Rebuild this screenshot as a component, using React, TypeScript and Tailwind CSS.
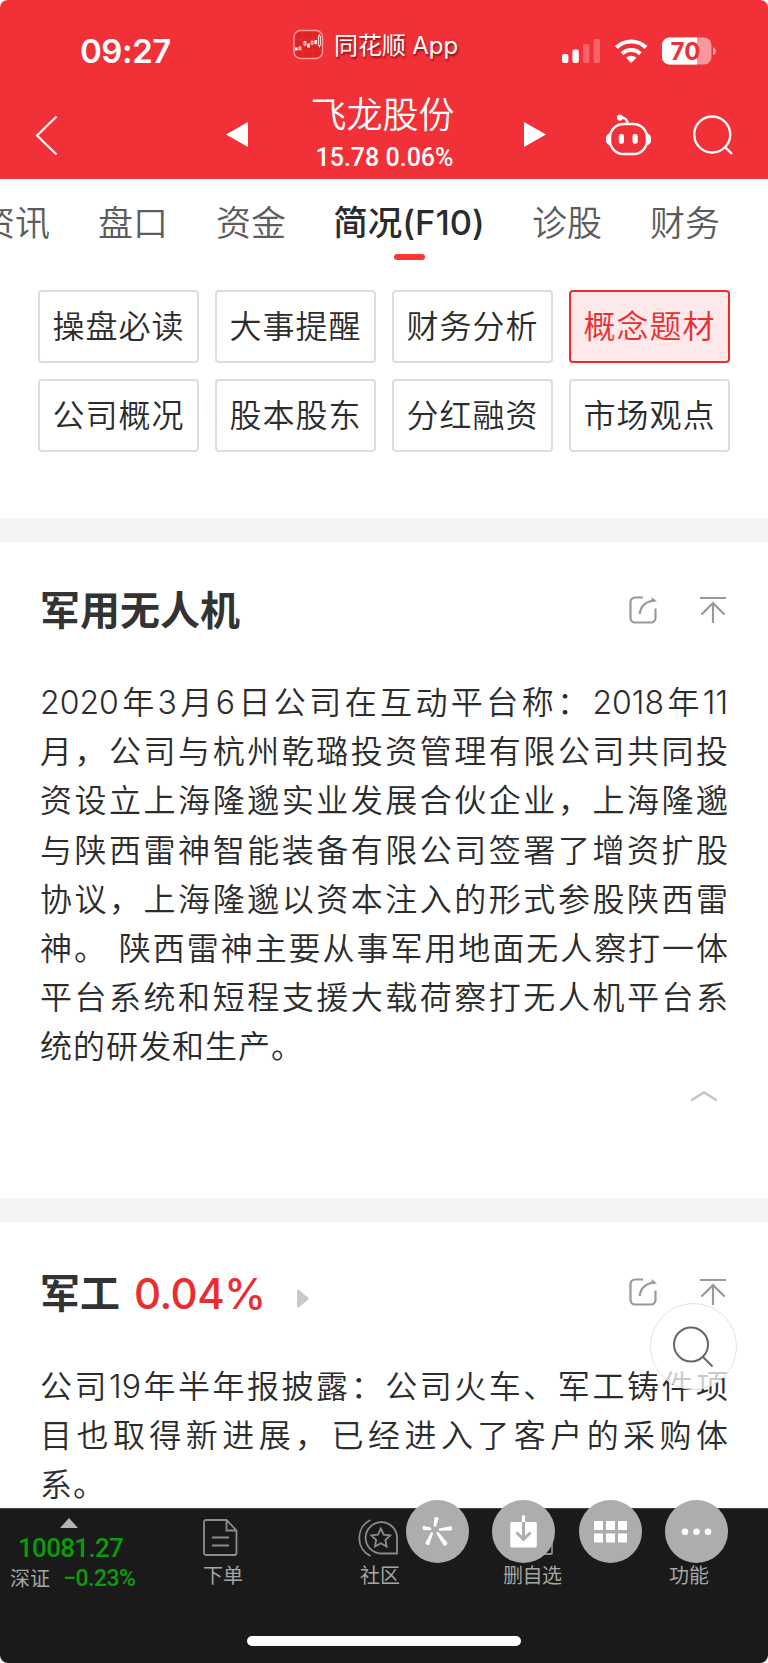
const tabs = [
  { name: "资讯", active: false },
  { name: "盘口", active: false },
  { name: "资金", active: false },
  { name: "简况(F10)", active: true },
  { name: "诊股", active: false },
  { name: "财务", active: false },
];

const subMenus = [
  { name: "操盘必读", active: false },
  { name: "大事提醒", active: false },
  { name: "财务分析", active: false },
  { name: "概念题材", active: true },
  { name: "公司概况", active: false },
  { name: "股本股东", active: false },
  { name: "分红融资", active: false },
  { name: "市场观点", active: false },
];

const droneLines = [
  "2020年3月6日公司在互动平台称：2018年11",
  "月，公司与杭州乾璐投资管理有限公司共同投",
  "资设立上海隆邈实业发展合伙企业，上海隆邈",
  "与陕西雷神智能装备有限公司签署了增资扩股",
  "协议，上海隆邈以资本注入的形式参股陕西雷",
  "神。 陕西雷神主要从事军用地面无人察打一体",
  "平台系统和短程支援大载荷察打无人机平台系",
  "统的研发和生产。",
];

const militaryLines = ["公司19年半年报披露：公司火车、军工铸件项", "目也取得新进展，已经进入了客户的采购体", "系。"];

const StatusBar = () => (
  <div className="flex h-[90px] items-start text-white">
    <span className="ml-[80px] mt-[27px] w-[213px] text-[33px] leading-[48px] font-semibold tracking-[-0.4px]">09:27</span>
    <svg className="mt-[29px] size-[31px]" viewBox="0 0 31 31" fill="none">
      <rect x="1" y="1.5" width="28.5" height="28" rx="6.5" fill="#e02424" stroke="#f9a0a4" strokeWidth="1.4" />
      <path d="M2 18.5h2.6v3H2zM14.2 14.6h2.6v4h-2.6zM21.5 11h2.4v4.2h-2.4z" fill="#fff" />
      <path d="M6.8 16.8v1.2M6 18h1.8v2.8H6zM11 12.5h1.8v3.8H11zM18.2 12.2h1.8v3h-1.8zM25.4 7h2v9.500h-2zM26.4 5v2M26.4 16.5v2" stroke="#fff" strokeWidth="0.9" />
      <path d="M2 10h27M2 22h27M10 3v26M20 3v26" stroke="#f25a5a" strokeWidth="0.4" opacity="0.5" />
    </svg>
    <span className="ml-[10px] mt-[26px] w-[228px] text-[24px] leading-[40px] tracking-[-0.1px] whitespace-nowrap [text-shadow:1px_2px_2px_rgba(80,0,0,0.65)]">
      同花顺 App
    </span>
    <svg className="mt-[36px] h-[30px] w-[160px]" viewBox="0 0 160 30" fill="#fff">
      <rect x="0" y="18" width="6.4" height="9" rx="2" />
      <rect x="10.4" y="13.4" width="6.4" height="13.6" rx="2" />
      <rect x="21" y="8" width="6.4" height="19" rx="2" opacity="0.25" />
      <rect x="31.6" y="3" width="6.4" height="24" rx="2" opacity="0.25" />
      <path d="M69.2 27 64 21.8a7.6 7.6 0 0 1 10.4 0z" />
      <path d="M60 17.8a13.2 13.2 0 0 1 18.4 0" fill="none" stroke="#fff" strokeWidth="4" />
      <path d="M54.4 11.6a21 21 0 0 1 29.6 0" fill="none" stroke="#fff" strokeWidth="4.2" />
      <rect x="100" y="1.5" width="49.5" height="27" rx="7.5" opacity="0.5" />
      <path d="M107.5 1.5H135v27h-27.500a7.500 7.500 0 0 1-7.500-7.500V9a7.500 7.500 0 0 1 7.500-7.500z" />
      <path d="M151 11.2c4 .8 4 7 0 7.800z" opacity="0.5" />
      <text x="123.5" y="24" textAnchor="middle" fontSize="24" fontWeight="700" fill="#ef2f37" className="font-[Inter]">70</text>
    </svg>
  </div>
);

const StockHeader = () => (
  <div className="flex h-[89px] items-start text-white">
    <svg className="ml-[35px] mt-[25px] h-[42px] w-[24px]" viewBox="0 0 24 42" fill="none" stroke="#fff" strokeWidth="2.2">
      <path d="M21.5 1.5 2 20.5l19.500 19" />
    </svg>
    <svg className="ml-[167px] mt-[32px] h-[25px] w-[22px]" viewBox="0 0 22 25" fill="#fff">
      <path d="M0 12.5 22 0v25z" />
    </svg>
    <div className="flex w-[275px] flex-col items-center">
      <h1 className="mt-[1px] ml-[-6px] text-[36px] leading-[48px] font-[350]">飞龙股份</h1>
      <p className="mt-[3px] ml-[-2px] font-[Roboto] text-[25px] leading-[32px] font-medium">15.78 0.06%</p>
    </div>
    <svg className="ml-px mt-[32px] h-[25px] w-[22px]" viewBox="0 0 22 25" fill="#fff">
      <path d="M22 12.5 0 0v25z" />
    </svg>
    <svg className="ml-[59px] mt-[23px] h-[44px] w-[48px]" viewBox="0 0 48 44" fill="none" stroke="#fff" strokeWidth="2.4">
      <rect x="5" y="11" width="37" height="30" rx="13.5" />
      <path d="M5 21c-4.500 1-4.500 9.500 0 10.500zM42 21c4.500 1 4.500 9.500 0 10.500z" fill="#fff" strokeWidth="1.5" />
      <path d="M15.500 4.500c4 0 7 2 7 6.500" />
      <circle cx="15" cy="4.500" r="3.100" fill="#fff" stroke="none" />
      <rect x="13.800" y="21" width="5.200" height="9.800" rx="2.200" fill="#fff" stroke="none" />
      <rect x="27.500" y="21" width="5.200" height="9.800" rx="2.200" fill="#fff" stroke="none" />
    </svg>
    <svg className="ml-[40px] mt-[25px] size-[42px]" viewBox="0 0 42 42" fill="none" stroke="#fff" strokeWidth="2.4">
      <circle cx="19.2" cy="19.500" r="18" />
      <path d="m31.500 31.500 7.500 7.500" />
    </svg>
  </div>
);

const CardActions = () => (
  <div className="flex gap-[42px] pr-px text-[#999]">
    <svg className="size-[28px]" viewBox="0 0 28 28" fill="none" stroke="currentColor" strokeWidth="2.2">
      <path d="M14 1.500H6A4.500 4.500 0 0 0 1.500 6v16A4.500 4.500 0 0 0 6 26.500h16a4.500 4.500 0 0 0 4.500-4.500V12.500" />
      <path d="M10.800 18C11 10.500 17 4.800 26 4.600" />
      <path d="M22.500 1 28 5.600h-5z" fill="currentColor" stroke="none" />
    </svg>
    <svg className="size-[28px]" viewBox="0 0 28 28" fill="none" stroke="currentColor" strokeWidth="2.2">
      <path d="M1 2h26M14 27V7M2.500 18.500 14 7l11.500 11.500" />
    </svg>
  </div>
);

const Paragraph = ({ lines }: { lines: string[] }) => (
  <div className="text-[32px] leading-[49.2px] font-[350] text-[#2c2c2c]">
    {lines.map((line, index) => (
      <p
        key={line}
        className={index === lines.length - 1 ? "tracking-[1px] whitespace-nowrap" : "whitespace-nowrap [text-align-last:justify]"}
      >
        {line}
      </p>
    ))}
  </div>
);

const BottomBar = () => (
  <footer className="relative flex h-[155px] rounded-b-[8px] border-t border-[#444] bg-[#1a1a1a] text-[20px] leading-[28px] text-[#a5a5a5]">
    <div className="flex w-[150px] flex-col pl-[10px] whitespace-nowrap">
      <svg className="ml-[50px] mt-[9px] h-[10px] w-[18px]" viewBox="0 0 18 10" fill="#b4b4b4">
        <path d="M9 0l9 10H0z" />
      </svg>
      <span className="ml-[8px] mt-[6px] font-[Roboto] text-[26px] leading-[28px] font-medium tracking-[-0.7px] text-[#0a9d0a]">10081.27</span>
      <div className="mt-[2px] flex items-center">
        <span className="mt-px w-[53px]">深证</span>
        <span className="mt-px font-[Roboto] text-[23px] font-medium tracking-[-0.5px] text-[#0a9d0a]">−0.23%</span>
      </div>
    </div>
    <div className="ml-[53px] flex w-[40px] flex-col gap-[5px] pt-[10px]">
      <svg className="h-[38px] w-[35px]" viewBox="0 0 35 38" fill="none" stroke="#8c8c8c" strokeWidth="1.8">
        <path d="M3 1h20.500l10 10.500V34a2 2 0 0 1-2 2H3a2 2 0 0 1-2-2V3a2 2 0 0 1 2-2zM23.500 1v10.500h10M9 18.500h17M9 26.500h17" />
      </svg>
      <span>下单</span>
    </div>
    <div className="ml-[115px] flex w-[42px] flex-col gap-[5px] pt-[10px]">
      <svg className="h-[38px] w-[42px]" viewBox="0 0 42 38" fill="none" stroke="#8c8c8c" strokeWidth="1.8">
        <path d="M12.500 1C-2.500 8-2.500 30 12.500 37" />
        <path d="M39 34.500H23A15.700 15.700 0 1 1 39 19z" />
        <path d="m22.800 9.500 2.900 6.100 6.500.8-4.800 4.600 1.200 6.500-5.800-3.200-5.800 3.200 1.200-6.500-4.800-4.600 6.500-.8z" />
      </svg>
      <span className="pl-[2px]">社区</span>
    </div>
    <div className="ml-[103px] flex w-[62px] flex-col gap-[5px] pt-[10px]">
      <svg className="ml-[12px] h-[38px] w-[40px]" viewBox="0 0 40 38" fill="none" stroke="#8c8c8c" strokeWidth="1.8">
        <rect x="2" y="2" width="35" height="33" rx="1" />
      </svg>
      <span className="tracking-[-0.5px]">删自选</span>
    </div>
    <div className="ml-[104px] pt-[53px]">功能</div>
    <div className="absolute top-[127px] left-[247px] h-[10px] w-[274px] rounded-full bg-white" />
    <FloatingTools />
  </footer>
);

// round shortcut buttons that hover over the top edge of the bottom bar
const FloatingTools = () => (
  <div className="absolute top-[-9px] left-[405.5px] flex gap-[23.5px]">
    <div className="size-[63px] rounded-full bg-[#adadad]">
      <svg className="size-[63px]" viewBox="0 0 63 63" fill="#fff">
        <path d="M28.500 17.800c.8-1.400 4.200-1 4 .8l-2.300 7.600c-.6 1-2.800.6-2.700-.6z" />
        <path d="M17.500 26c-1.300.5-1.200 3.600.3 3.900l6.500.4c1.300 0 1.400-2.300.2-2.700z" />
        <path d="M44.500 26.300c1.900-.1 2.200 3.800.3 4.200l-11.300.3c-1.200-.1-1.300-1.900-.1-2.200z" />
        <path d="m25 32.500-5.500 10.300c-.7 1.700 2.600 3.200 3.900 1.600l3.600-10.800c.2-1.300-1.300-1.900-2-1.100z" />
        <path d="M30.800 32.300c.8-.5 1.500-.3 2 .2l8.300 10c1 1.700-1.800 4.200-3.500 2.800l-7-11.400c-.3-.6-.2-1.200.2-1.600z" />
      </svg>
    </div>
    <div className="size-[63px] rounded-full bg-[#adadad]">
      <svg className="size-[63px]" viewBox="0 0 63 63" fill="none">
        <rect x="18.300" y="22" width="26.500" height="25.500" rx="1.5" fill="#fff" />
        <path d="M31.500 15.500V22" stroke="#fff" strokeWidth="3.2" />
        <path d="M31.500 22v17M24.500 32.500l7 7 7-7" stroke="#adadad" strokeWidth="3" />
      </svg>
    </div>
    <div className="size-[63px] rounded-full bg-[#adadad]">
      <svg className="size-[63px]" viewBox="0 0 63 63" fill="#fff">
        <path d="M15 21h9v9h-9zM27 21h9v9h-9zM39 21h9v9h-9zM15 33.500h9v9h-9zM27 33.500h9v9h-9zM39 33.500h9v9h-9z" />
      </svg>
    </div>
    <div className="size-[63px] rounded-full bg-[#adadad]">
      <svg className="size-[63px]" viewBox="0 0 63 63" fill="#fff">
        <circle cx="20" cy="31.8" r="3.3" />
        <circle cx="31.5" cy="31.8" r="3.3" />
        <circle cx="43" cy="31.8" r="3.3" />
      </svg>
    </div>
  </div>
);

const App = () => {
  return (
    <div className="h-[1663px] w-[768px] overflow-hidden bg-white font-[Inter,'Noto_Sans_CJK_SC',sans-serif] text-[#333]" lang="zh-CN">
      <header className="rounded-t-[8px] bg-[#f23037]">
        <StatusBar />
        <StockHeader />
      </header>

      <nav className="flex h-[111px] gap-[48px] overflow-hidden">
        {tabs.map((tab) => (
          <div
            key={tab.name}
            className={
              tab.active
                ? "flex w-[150px] shrink-0 flex-col items-center pt-[19px] text-[34.5px] leading-[50px] font-medium whitespace-nowrap text-[#2b2b2b]"
                : "w-[70px] shrink-0 pt-[19px] text-[35px] leading-[50px] font-[350] whitespace-nowrap text-[#5c5c5c] first:ml-[-20px]"
            }
          >
            {tab.name}
            {tab.active && <div className="mt-[6px] h-[6px] w-[31px] rounded-[3px] bg-[#fc3632]" />}
          </div>
        ))}
      </nav>

      <div className="grid h-[228px] grid-cols-4 content-start gap-[16px] px-[38px]">
        {subMenus.map((menu) => (
          <button
            key={menu.name}
            className={
              menu.active
                ? "h-[73px] rounded-[4px] border-2 border-[#ec2d30] bg-[#fde8ea] pt-px text-[32px] font-[350] tracking-[1px] whitespace-nowrap text-[#ec2d30]"
                : "h-[73px] rounded-[4px] border-2 border-[#ddd] pt-px text-[32px] font-[350] tracking-[1px] whitespace-nowrap text-[#2c2c2c]"
            }
          >
            {menu.name}
          </button>
        ))}
      </div>

      <div className="h-[24px] bg-[#f4f4f4]" />

      <section className="h-[656px] px-[40px]">
        <div className="flex items-start justify-between pt-[40px]">
          <h2 className="text-[40px] leading-[58px] font-bold">军用无人机</h2>
          <div className="mt-[14px]">
            <CardActions />
          </div>
        </div>
        <div className="mt-[38px]">
          <Paragraph lines={droneLines} />
        </div>
        <svg className="mt-[18px] ml-auto mr-[10px] h-[12px] w-[28px]" viewBox="0 0 28 12" fill="none" stroke="#c4c4c4" strokeWidth="2.5">
          <path d="M1 10.500 14 2.500l13 8" />
        </svg>
      </section>

      <div className="h-[24px] bg-[#f4f4f4]" />

      <section className="relative h-[286px] px-[40px]">
        <div className="flex items-start justify-between pt-[43px]">
          <h2 className="flex items-center text-[40px] leading-[58px] font-bold">
            军工
            <span className="ml-[14px] text-[42px] font-medium tracking-[-0.5px] text-[#ec2d30]">0.04%</span>
            <svg className="mt-[8px] ml-[32px] h-[19px] w-[12px]" viewBox="0 0 12 19" fill="#c8c8c8">
              <path d="M0 2q0-2 2-1l9.500 8q.8.700 0 1.300L2 18.300q-2 1-2-1z" />
            </svg>
          </h2>
          <div className="mt-[13px]">
            <CardActions />
          </div>
        </div>
        <div className="mt-[39px]">
          <Paragraph lines={militaryLines} />
        </div>
        <div className="absolute top-[81px] left-[649.5px] size-[87px] rounded-full border border-[#e2e2e2] bg-white/75">
          <svg className="size-[85px]" viewBox="0 0 85 85" fill="none" stroke="#666" strokeWidth="2">
            <circle cx="40" cy="40.5" r="17" />
            <path d="m52 53 9.500 9.500" />
          </svg>
        </div>
      </section>

      <BottomBar />
    </div>
  );
};

export default App;
